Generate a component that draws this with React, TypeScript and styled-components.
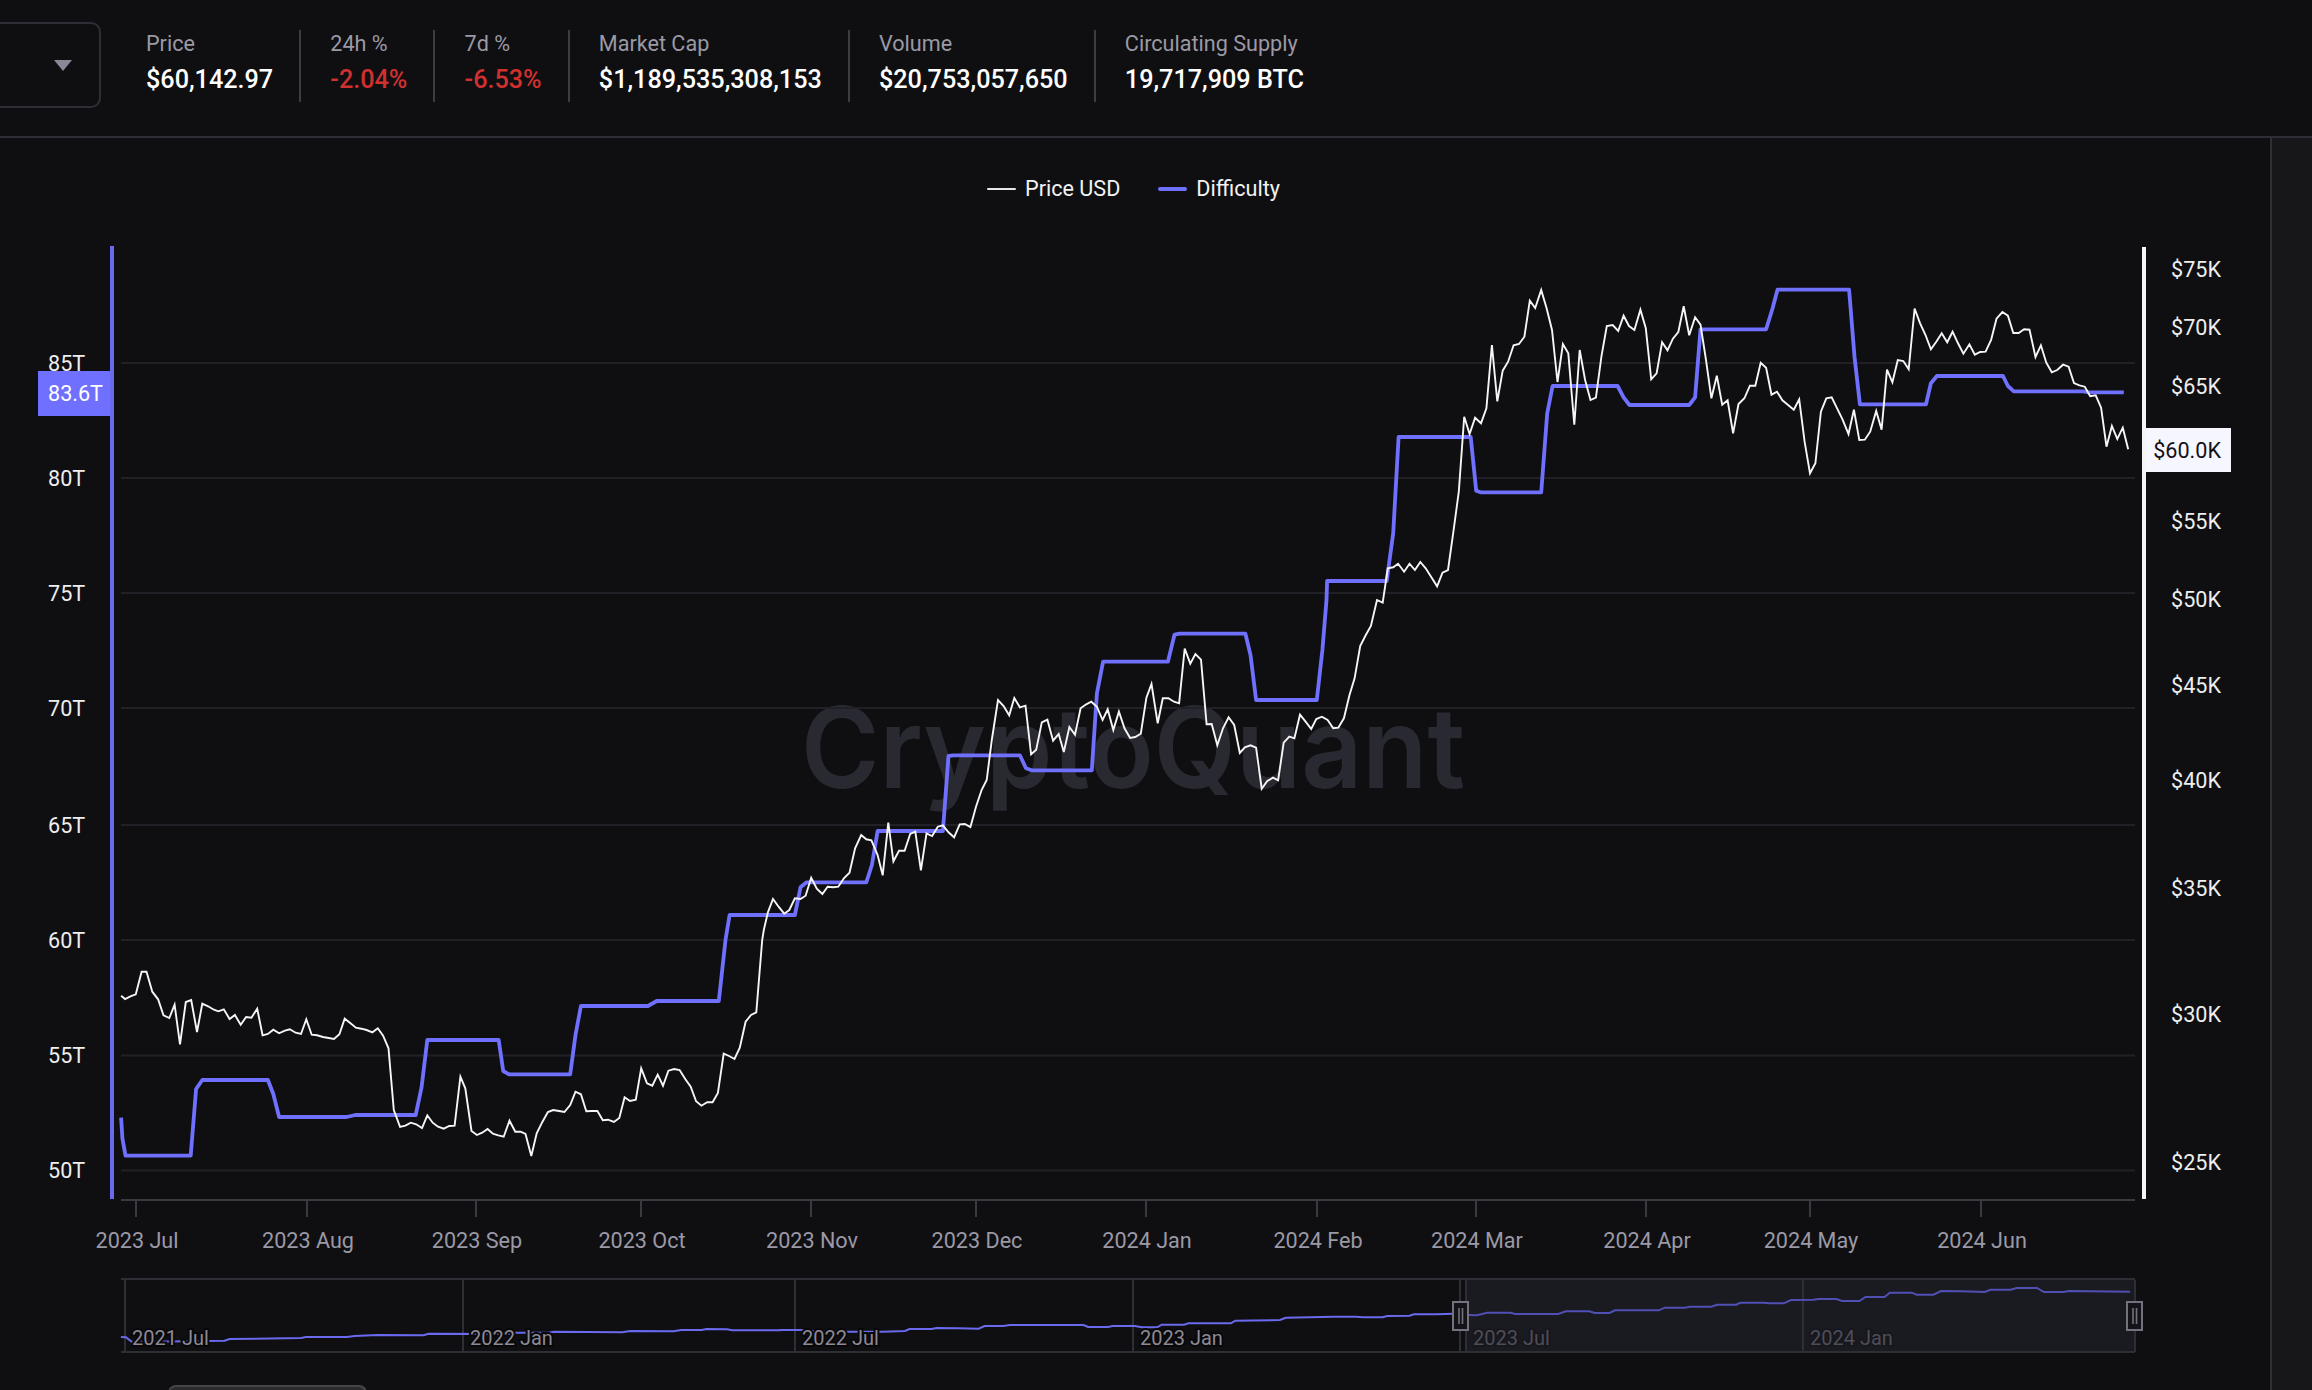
import React from "react";
import styled, { createGlobalStyle } from "styled-components";

type Pt = [number, number];

const BG = "#0f0f12";
const LINE = "#2e2e36";
const PURPLE = "#7070ff";
const FONT = 'Roboto, "Liberation Sans", sans-serif';

// the traces were read off zoomed crops, so each one carries its crop's origin and x scale
const fromCrop = (pts: Pt[], ox: number, oy: number, sx: number): Pt[] =>
  pts.map(([x, y]) => [ox + x / sx, oy + y / 3]);

const toPoints = (pts: Pt[]) =>
  pts.map(([x, y]) => `${x.toFixed(1)},${y.toFixed(1)}`).join(" ");

const PRICE: Pt[] = [
  ...fromCrop(
    [[92,167],[101,177],[113,169],[125,163],[138,95],[149,95],[162,155],[175,178],[187,226],[200,234],[212,194],[224,313],[237,186],[249,180],[262,276],[274,191],[287,199],[300,209],[310,214],[322,208],[335,237],[347,225],[360,254],[372,231],[384,233],[397,206],[409,286],[421,282],[433,269],[446,280],[459,272],[470,268],[483,278],[495,282],[507,238],[519,284],[531,286],[544,291],[557,294],[569,297],[581,283],[593,236],[606,250],[618,263],[630,266],[642,270],[655,277],[667,265],[679,287],[691,325],[703,510],[717,561],[729,557],[741,548],[753,553],[766,564],[778,526],[790,548],[802,560],[815,566],[827,558],[839,557],[852,410],[863,445],[877,573],[889,585],[901,578],[913,567],[925,581],[937,586],[949,590],[962,542],[975,575],[987,575],[998,582],[1011,648],[1023,580],[1036,545],[1048,516],[1060,510],[1073,513],[1085,516],[1098,495],[1110,455],[1122,463],[1134,514],[1147,513],[1159,513],[1171,541],[1183,539],[1196,546],[1208,534],[1220,472],[1232,483],[1245,479],[1257,385],[1270,430],[1282,437],[1294,404],[1306,437],[1318,392],[1331,387],[1343,390],[1356,418],[1368,440],[1380,484],[1392,497],[1405,487],[1417,487],[1429,459],[1442,341],[1454,348],[1466,357],[1478,323],[1491,245],[1503,225],[1515,217]],
    80, 940, 2.24
  ),
  ...fromCrop(
    [[122,1020],[125,990],[133,937],[143,897],[154,920],[165,941],[175,930],[186,895],[197,897],[207,887],[218,833],[229,866],[240,882],[250,860],[261,862],[271,860],[282,835],[293,818],[304,745],[316,705],[326,718],[336,721],[348,765],[358,826],[369,668],[379,784],[390,752],[401,752],[412,702],[422,695],[433,811],[444,700],[455,708],[466,680],[476,676],[487,697],[498,712],[509,673],[519,672],[530,681],[541,620],[552,570],[562,540],[572,420],[584,300],[595,318],[606,346],[616,294],[627,322],[638,317],[649,463],[659,449],[670,367],[681,359],[692,422],[703,402],[713,456],[724,381],[735,404],[746,325],[757,313],[767,305],[778,320],[789,360],[799,328],[810,390],[821,335],[832,385],[843,414],[853,411],[864,401],[875,293],[885,252],[897,370],[907,295],[918,295],[929,305],[939,310],[950,146],[961,191],[971,162],[982,179],[993,373],[1003,372],[1014,436],[1025,385],[1036,352],[1047,375],[1058,459],[1068,442],[1079,436],[1090,443],[1101,566],[1112,543],[1123,533],[1133,541],[1144,428],[1155,410],[1165,415],[1176,344],[1187,365],[1198,387],[1208,357],[1219,350],[1230,360],[1241,385],[1251,383],[1262,355],[1273,285],[1283,235],[1294,138],[1305,105],[1315,78],[1327,0],[1338,8]],
    700, 600, 1.96
  ),
  ...fromCrop(
    [[162,925],[172,922],[181,911],[192,935],[202,911],[212,930],[222,906],[232,925],[243,953],[253,979],[263,938],[273,930],[283,815],[293,695],[303,470],[313,522],[323,473],[334,490],[344,445],[354,255],[364,424],[374,332],[384,305],[394,256],[404,252],[414,230],[424,122],[434,144],[445,90],[455,145],[465,210],[475,366],[485,252],[495,280],[506,494],[516,270],[526,360],[536,420],[546,413],[556,290],[566,198],[577,195],[587,213],[597,167],[607,198],[617,210],[628,149],[638,205],[648,358],[658,340],[668,247],[678,271],[688,236],[698,216],[708,139],[718,226],[729,172],[739,194],[749,300],[759,415],[769,347],[779,434],[789,421],[799,520],[809,432],[820,415],[830,377],[840,377],[850,308],[860,323],[870,404],[880,395],[890,421],[900,434],[911,449],[921,418],[931,545],[941,640],[951,610],[961,455],[971,415],[981,412],[991,445],[1001,478],[1012,522],[1022,449],[1032,540],[1042,539],[1052,515],[1063,453],[1073,509],[1083,329],[1093,367],[1103,300],[1113,303],[1123,328],[1134,146],[1144,190],[1154,225],[1164,268],[1174,245],[1184,220],[1194,247],[1204,215],[1214,250],[1224,281],[1235,253],[1245,284],[1255,276],[1265,275],[1275,240],[1285,176],[1296,156],[1306,167],[1316,219],[1326,219],[1336,208],[1346,209],[1357,291],[1367,256],[1377,308],[1387,337],[1397,330],[1408,314],[1418,320],[1428,369],[1438,376],[1448,380],[1458,409],[1468,406],[1478,443],[1488,560],[1498,498],[1508,537],[1518,503],[1528,568]],
    1300, 260, 1.845
  ),
];

const DIFFICULTY: Pt[] = [
  ...fromCrop(
    [[92,533],[95,595],[102,647],[248,647],[260,447],[274,420],[421,420],[433,462],[446,531],[597,531],[617,525],[752,525],[765,443],[778,300],[938,300],[948,393],[961,403],[1098,403],[1110,285],[1122,198],[1272,198],[1292,183],[1431,183]],
    80, 940, 2.24
  ),
  ...fromCrop(
    [[50,1020],[58,945],[186,945],[197,862],[209,847],[326,847],[337,795],[348,693],[476,693],[487,468],[497,466],[627,466],[639,505],[650,511],[768,511],[778,280],[790,185],[917,185],[930,104],[940,101],[1069,101],[1079,165],[1090,300],[1209,300],[1220,150],[1228,0]],
    700, 600, 1.96
  ),
  ...fromCrop(
    [[50,963],[160,963],[172,820],[182,531],[315,531],[325,692],[333,697],[445,697],[456,460],[466,378],[586,378],[597,412],[608,435],[718,435],[729,412],[739,208],[860,208],[872,145],[881,89],[1013,89],[1023,290],[1033,433],[1155,433],[1164,370],[1175,348],[1297,348],[1306,378],[1317,394],[1445,394],[1455,397],[1520,397]],
    1300, 260, 1.845
  ),
];

const NAV_OUTSIDE: Pt[] = [
  ...fromCrop(
    [[237,561],[247,562],[258,575],[290,575],[440,572],[450,567],[590,564],[600,561],[680,561],[695,558],[740,555],[830,556],[840,551],[1000,552],[1010,548],[1075,548],[1085,545],[1220,547],[1235,543],[1320,544],[1335,540],[1375,540],[1385,537],[1425,538],[1435,541],[1530,541]],
    0, 1150, 1.96
  ),
  ...fromCrop(
    [[0,165],[45,165],[100,170],[230,170],[280,168],[290,162],[340,162],[350,159],[400,160],[445,161],[458,153],[500,153],[515,150],[680,150],[690,156],[735,156],[745,153],[795,153],[810,157],[845,157],[855,149],[905,149],[915,145],[1010,145],[1020,137],[1120,135],[1133,128],[1240,125],[1290,125],[1305,127],[1350,127],[1360,123],[1410,122],[1420,118],[1470,118],[1510,116]],
    780, 1275, 2.24
  ),
];

const NAV_INSIDE: Pt[] = fromCrop(
  [[118,495],[132,496],[150,488],[190,488],[198,492],[272,492],[285,484],[325,484],[335,489],[360,489],[370,481],[445,481],[455,473],[490,473],[498,470],[535,470],[545,464],[578,464],[585,458],[625,458],[635,460],[660,460],[672,450],[710,449],[720,447],[750,447],[760,453],[790,453],[800,441],[833,441],[842,428],[880,428],[888,434],[917,434],[930,423],[965,424],[1005,426],[1015,419],[1050,419],[1060,414],[1095,414],[1107,426],[1140,426],[1150,423],[1255,425]],
  1400, 1150, 1.719
);

const STATS = [
  { label: "Price", value: "$60,142.97" },
  { label: "24h %", value: "-2.04%", down: true },
  { label: "7d %", value: "-6.53%", down: true },
  { label: "Market Cap", value: "$1,189,535,308,153" },
  { label: "Volume", value: "$20,753,057,650" },
  { label: "Circulating Supply", value: "19,717,909 BTC" },
];

const LEFT_TICKS = [
  { label: "80T", y: 478 },
  { label: "75T", y: 593 },
  { label: "70T", y: 708 },
  { label: "65T", y: 825 },
  { label: "60T", y: 940 },
  { label: "55T", y: 1055.5 },
  { label: "50T", y: 1170.5 },
];
const GRID = [363, ...LEFT_TICKS.map((t) => t.y)];

const RIGHT_TICKS = [
  { label: "$75K", y: 269 },
  { label: "$70K", y: 327 },
  { label: "$65K", y: 386 },
  { label: "$55K", y: 521 },
  { label: "$50K", y: 599 },
  { label: "$45K", y: 685 },
  { label: "$40K", y: 780 },
  { label: "$35K", y: 888 },
  { label: "$30K", y: 1014 },
  { label: "$25K", y: 1162 },
];

const MONTHS = [
  { label: "2023 Jul", x: 136 },
  { label: "2023 Aug", x: 307 },
  { label: "2023 Sep", x: 476 },
  { label: "2023 Oct", x: 641 },
  { label: "2023 Nov", x: 811 },
  { label: "2023 Dec", x: 976 },
  { label: "2024 Jan", x: 1146 },
  { label: "2024 Feb", x: 1317 },
  { label: "2024 Mar", x: 1476 },
  { label: "2024 Apr", x: 1646 },
  { label: "2024 May", x: 1810 },
  { label: "2024 Jun", x: 1981 },
];

const NAV_MARKS = [
  { label: "2021 Jul", x: 125 },
  { label: "2022 Jan", x: 463 },
  { label: "2022 Jul", x: 795 },
  { label: "2023 Jan", x: 1133 },
  { label: "2023 Jul", x: 1466, dim: true },
  { label: "2024 Jan", x: 1803, dim: true },
];

const GlobalStyle = createGlobalStyle`
  html, body {
    margin: 0;
    background: ${BG};
    overflow: hidden;
  }
`;

const Page = styled.div`
  width: 2312px;
  height: 1390px;
  overflow: hidden;
  display: flex;
  flex-direction: column;
  background: ${BG};
  font-family: ${FONT};
`;

const Header = styled.header`
  flex: none;
  height: 138px;
  box-sizing: border-box;
  display: flex;
  align-items: center;
  padding-bottom: 4px;
  border-bottom: 2px solid ${LINE};
`;

const Select = styled.div`
  width: 121px;
  height: 86px;
  margin: -3px 45px 0 -20px;
  box-sizing: border-box;
  display: flex;
  align-items: center;
  justify-content: flex-end;
  padding: 2px 27px 0 0;
  border: 2px solid ${LINE};
  border-radius: 10px;
`;

const Caret = styled.span`
  width: 0;
  height: 0;
  border-left: 9px solid transparent;
  border-right: 9px solid transparent;
  border-top: 11px solid #8a8896;
`;

const Stats = styled.div`
  display: flex;
`;

const Stat = styled.div`
  height: 72px;
  box-sizing: border-box;
  padding: 0 26px 0 29.2px;
  display: flex;
  flex-direction: column;
  gap: 6px;
  border-right: 2px solid #3c3c44;

  &:first-child {
    padding-left: 0;
  }
  &:last-child {
    border-right: none;
  }
`;

const StatLabel = styled.div`
  font-size: 21.6px;
  line-height: 28px;
  color: #9b99a5;
`;

const StatValue = styled.div<{ $down?: boolean }>`
  font-size: 25.2px;
  line-height: 32px;
  font-weight: 500;
  color: ${(p) => (p.$down ? "#d0312f" : "#ffffff")};
`;

const Body = styled.div`
  flex: 1;
  min-height: 0;
  display: flex;
`;

const Main = styled.main`
  flex: 1;
  min-width: 0;
  display: flex;
  flex-direction: column;
`;

const Rail = styled.aside`
  flex: none;
  width: 42px;
  background: #17171a;
  border-left: 2px solid ${LINE};
  box-sizing: border-box;
`;

const Legend = styled.div`
  flex: none;
  height: 27px;
  margin-top: 37px;
  padding-right: 3px;
  display: flex;
  align-items: center;
  justify-content: center;
  gap: 38px;
`;

const LegendItem = styled.div`
  display: flex;
  align-items: center;
  gap: 9px;
  font-size: 21.6px;
  color: #f2f2f2;
`;

const Swatch = styled.span<{ $thick?: boolean }>`
  width: 29px;
  height: ${(p) => (p.$thick ? 4 : 2)}px;
  border-radius: 2px;
  background: ${(p) => (p.$thick ? PURPLE : "#e8e8e8")};
`;

const ChartSvg = styled.svg`
  flex: none;
  display: block;
  margin-top: 38px;
`;

const Label = styled.text<{ $tone?: "light" | "muted" | "dark" | "white" }>`
  font-family: ${FONT};
  font-size: 21.6px;
  dominant-baseline: central;
  fill: ${(p) =>
    p.$tone === "muted"
      ? "#9b99a5"
      : p.$tone === "dark"
      ? "#111114"
      : p.$tone === "white"
      ? "#ffffff"
      : "#eeeeee"};
`;

const NavLabel = styled.text<{ $dim?: boolean }>`
  font-family: ${FONT};
  font-size: 20px;
  dominant-baseline: central;
  fill: ${(p) => (p.$dim ? "#4e4d58" : "#8c8a94")};
  stroke: ${(p) => (p.$dim ? "#17171d" : "#08080a")};
  stroke-width: 4px;
  paint-order: stroke;
`;

const Watermark = styled.text`
  font-family: Inter, ${FONT};
  font-size: 112px;
  font-weight: 600;
  fill: #292931;
`;

const TabPeek = styled.div`
  flex: none;
  width: 199px;
  height: 20px;
  margin-left: 168px;
  box-sizing: border-box;
  background: #2b2b2d;
  border: 2px solid #454547;
  border-bottom: none;
  border-radius: 8px 8px 0 0;
`;

const Handle = ({ x }: { x: number }) => (
  <g>
    <rect x={x} y={1302} width={15} height={28} fill="#141418" stroke="#74727e" strokeWidth={2} />
    <path
      d={`M${x + 6} 1308V1324M${x + 9.5} 1308V1324`}
      stroke="#74727e"
      strokeWidth={1.6}
    />
  </g>
);

const Chart = () => (
  <ChartSvg width={2270} height={1145} viewBox="0 240 2270 1145">
    <Watermark x={801} y={788} textLength={664} lengthAdjust="spacingAndGlyphs">
      CryptoQuant
    </Watermark>

    {GRID.map((y) => (
      <line key={y} x1={121} x2={2135} y1={y} y2={y} stroke="#202026" strokeWidth={2} />
    ))}

    <line x1={121} x2={2135} y1={1200} y2={1200} stroke="#3a3a42" strokeWidth={2} />
    {MONTHS.map((m) => (
      <g key={m.label}>
        <line x1={m.x} x2={m.x} y1={1200} y2={1217} stroke="#3a3a42" strokeWidth={2} />
        <Label $tone="muted" x={m.x + 1} y={1240} textAnchor="middle">
          {m.label}
        </Label>
      </g>
    ))}

    <polyline
      points={toPoints(DIFFICULTY)}
      fill="none"
      stroke={PURPLE}
      strokeWidth={3.8}
      strokeLinejoin="round"
    />
    <polyline points={toPoints(PRICE)} fill="none" stroke="#f6f6f6" strokeWidth={1.9} />

    {LEFT_TICKS.map((t) => (
      <Label key={t.label} x={48} y={t.y}>
        {t.label}
      </Label>
    ))}
    <Label x={48} y={363}>
      85T
    </Label>
    <rect x={38} y={371} width={72} height={45} fill={PURPLE} />
    <Label $tone="white" x={48} y={393}>
      83.6T
    </Label>
    <rect x={110} y={246} width={4} height={953} fill="#6a6af0" />

    {RIGHT_TICKS.map((t) => (
      <Label key={t.label} x={2171} y={t.y}>
        {t.label}
      </Label>
    ))}
    <rect x={2142} y={247} width={4} height={952} fill="#f5f5f5" />
    <rect x={2146} y={428} width={85} height={44} fill="#f6f6ff" />
    <Label $tone="dark" x={2221} y={450} textAnchor="end">
      $60.0K
    </Label>

    <rect x={1466} y={1280} width={669} height={71} fill="#1a1a21" />
    {NAV_MARKS.map((m) => (
      <line key={m.label} x1={m.x} x2={m.x} y1={1280} y2={1352} stroke="#2e2e36" strokeWidth={2} />
    ))}
    <line x1={1460} x2={1460} y1={1280} y2={1352} stroke="#2e2e36" strokeWidth={2} />
    <line x1={2135} x2={2135} y1={1280} y2={1352} stroke="#2e2e36" strokeWidth={2} />
    <line x1={121} x2={2135} y1={1279} y2={1279} stroke="#2e2e36" strokeWidth={2} />
    <line x1={121} x2={2135} y1={1352} y2={1352} stroke="#2e2e36" strokeWidth={2} />
    <polyline points={toPoints(NAV_OUTSIDE)} fill="none" stroke="#6a6aee" strokeWidth={2} />
    <polyline points={toPoints(NAV_INSIDE)} fill="none" stroke="#4f4fb4" strokeWidth={2} />
    {NAV_MARKS.map((m) => (
      <NavLabel key={m.label} $dim={m.dim} x={m.x + 7} y={1338}>
        {m.label}
      </NavLabel>
    ))}
    <Handle x={1453} />
    <Handle x={2127} />
  </ChartSvg>
);

export default function App() {
  return (
    <>
      <GlobalStyle />
      <Page>
        <Header>
          <Select>
            <Caret />
          </Select>
          <Stats>
            {STATS.map((s) => (
              <Stat key={s.label}>
                <StatLabel>{s.label}</StatLabel>
                <StatValue $down={s.down}>{s.value}</StatValue>
              </Stat>
            ))}
          </Stats>
        </Header>
        <Body>
          <Main>
            <Legend>
              <LegendItem>
                <Swatch />
                Price USD
              </LegendItem>
              <LegendItem>
                <Swatch $thick />
                Difficulty
              </LegendItem>
            </Legend>
            <Chart />
            <TabPeek />
          </Main>
          <Rail />
        </Body>
      </Page>
    </>
  );
}
